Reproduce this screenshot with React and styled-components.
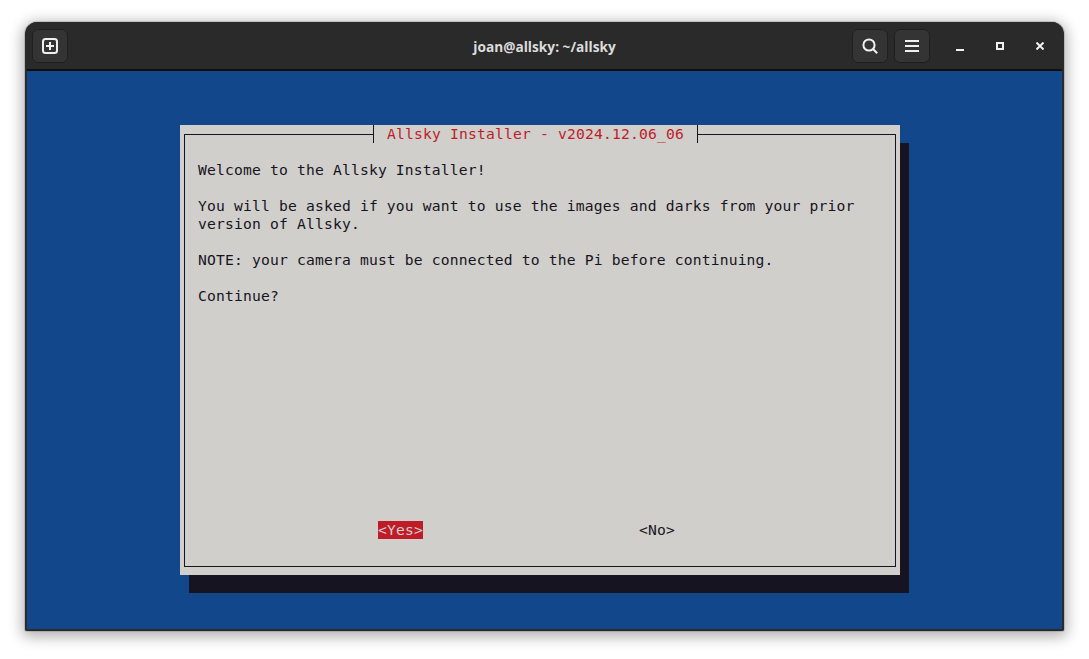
import React from "react";
import styled, { createGlobalStyle } from "styled-components";

const GlobalStyle = createGlobalStyle`
  html, body {
    margin: 0;
    padding: 0;
    background: #ffffff;
    overflow: hidden;
  }
`;

const Page = styled.div`
  width: 1089px;
  height: 659px;
  padding: 22px 25px 28px;
  box-sizing: border-box;
`;

const Window = styled.div`
  height: 609px;
  display: flex;
  flex-direction: column;
  box-sizing: border-box;
  border-radius: 12px 12px 2px 2px;
  border: 2px solid #2a2a2a;
  border-top: 0;
  background: #2a2a2a;
  box-shadow: 0 3px 14px 3px rgba(0, 0, 0, 0.3), 0 0 0 1px rgba(0, 0, 0, 0.12);
`;

const Header = styled.header`
  flex: 0 0 46px;
  display: flex;
  align-items: center;
  padding: 1px 2px 0 5px;
  position: relative;
  background: #2a2a2a;
  border-bottom: 2px solid #0f0f0f;
  border-radius: 10px 10px 0 0;
`;

const Title = styled.div`
  position: absolute;
  left: 0;
  right: 0;
  text-align: center;
  font-family: "Open Sans", "Noto Sans", sans-serif;
  font-size: 13.7px;
  font-weight: 700;
  color: #dcdcdc;
`;

const HeaderButton = styled.button`
  width: 36px;
  height: 34px;
  padding: 0;
  display: flex;
  align-items: center;
  justify-content: center;
  box-sizing: border-box;
  background: #343434;
  border: 1px solid #1f1f1f;
  border-radius: 6px;
  color: #f0f0f0;
`;

const Spacer = styled.div`
  flex: 1;
`;

const HeaderGroup = styled.div`
  display: flex;
  gap: 6px;
  margin-right: 10px;
`;

const WindowControl = styled.button`
  width: 40px;
  height: 34px;
  padding: 0;
  display: flex;
  align-items: center;
  justify-content: center;
  background: transparent;
  border: 0;
  color: #f0f0f0;
`;

const Terminal = styled.main`
  flex: 1;
  min-height: 0;
  background: #12488b;
  padding: 54px 0 0 153px;
  font-family: "DejaVu Sans Mono", monospace;
  font-size: 14.67px;
  line-height: 18px;
  letter-spacing: 0.17px;
  color: #171421;
`;

const Dialog = styled.section`
  width: 720px;
  height: 450px;
  box-sizing: border-box;
  padding: 9px 4px 8px;
  display: flex;
  background: #d0cfcc;
  box-shadow: 9px 18px 0 #171421;
  position: relative;
`;

const DialogTitle = styled.h1`
  position: absolute;
  top: 0;
  left: 193px;
  width: 325px;
  height: 18px;
  margin: 0;
  box-sizing: border-box;
  border-left: 1px solid #171421;
  border-right: 1px solid #171421;
  background: #d0cfcc;
  text-align: center;
  font: inherit;
  color: #c01c28;
  white-space: pre;
`;

const Frame = styled.div`
  flex: 1;
  display: flex;
  flex-direction: column;
  border: 1px solid #171421;
  padding: 26px 13px 27px;
`;

const Message = styled.div`
  flex: 1;
  white-space: pre;
`;

const ButtonRow = styled.div`
  display: flex;
  gap: 216px;
  padding-left: 180px;
`;

const DialogButton = styled.span`
  white-space: pre;
  background: ${({ $active }) => ($active ? "#c01c28" : "transparent")};
  color: ${({ $active }) => ($active ? "#d0cfcc" : "#171421")};
`;

const text = `Welcome to the Allsky Installer!

You will be asked if you want to use the images and darks from your prior
version of Allsky.

NOTE: your camera must be connected to the Pi before continuing.

Continue?`;

function App() {
  return (
    <Page>
      <GlobalStyle />
      <Window>
        <Header>
          <HeaderButton aria-label="New tab">
            <svg width="16" height="16" viewBox="0 0 16 16" fill="none" stroke="currentColor" strokeWidth="2">
              <rect x="1" y="1" width="14" height="14" rx="2.5" />
              <path d="M8 4v8M4 8h8" />
            </svg>
          </HeaderButton>
          <Title>joan@allsky: ~/allsky</Title>
          <Spacer />
          <HeaderGroup>
            <HeaderButton aria-label="Search">
              <svg width="16" height="16" viewBox="0 0 16 16" fill="none" stroke="currentColor" strokeWidth="2">
                <circle cx="7" cy="7" r="5.6" />
                <path d="M11 11l4.2 4.2" />
              </svg>
            </HeaderButton>
            <HeaderButton aria-label="Menu">
              <svg width="14" height="12" viewBox="0 0 14 12" fill="currentColor">
                <rect y="0" width="14" height="2" />
                <rect y="5" width="14" height="2" />
                <rect y="10" width="14" height="2" />
              </svg>
            </HeaderButton>
          </HeaderGroup>
          <WindowControl aria-label="Minimize">
            <svg width="8" height="10" viewBox="0 0 8 10" fill="currentColor">
              <rect y="8" width="8" height="2" />
            </svg>
          </WindowControl>
          <WindowControl aria-label="Maximize">
            <svg width="8" height="8" viewBox="0 0 8 8" fill="none" stroke="currentColor" strokeWidth="2">
              <rect x="1" y="1" width="6" height="6" />
            </svg>
          </WindowControl>
          <WindowControl aria-label="Close">
            <svg width="8" height="8" viewBox="0 0 8 8" fill="none" stroke="currentColor" strokeWidth="2">
              <path d="M0.5 0.5l7 7M7.5 0.5l-7 7" />
            </svg>
          </WindowControl>
        </Header>
        <Terminal>
          <Dialog>
            <DialogTitle>{" Allsky Installer - v2024.12.06_06 "}</DialogTitle>
            <Frame>
              <Message>{text}</Message>
              <ButtonRow>
                <DialogButton $active>{"<Yes>"}</DialogButton>
                <DialogButton>{"<No>"}</DialogButton>
              </ButtonRow>
            </Frame>
          </Dialog>
        </Terminal>
      </Window>
    </Page>
  );
}

export default App;
